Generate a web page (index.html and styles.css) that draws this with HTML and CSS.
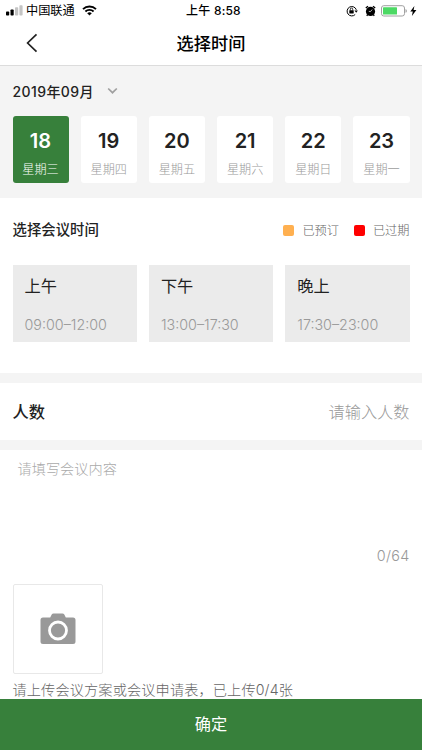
FILE: index.html
```
<!DOCTYPE html>
<html lang="zh-CN">
<head>
    <meta charset="UTF-8">
    <meta name="viewport" content="width=device-width, initial-scale=1.0">
    <title>选择时间</title>
    <link rel="stylesheet" href="styles.css">
</head>
<body>
    <div class="status-bar">
        <div class="carrier">
            <svg class="signal" width="17" height="11" viewBox="0 0 17 11">
                <rect x="0" y="6.5" width="3.2" height="4" rx="0.8" fill="#000"/>
                <rect x="4.5" y="4.5" width="3.2" height="6" rx="0.8" fill="#000"/>
                <rect x="9" y="2.3" width="3.2" height="8.2" rx="0.8" fill="#c4c4c4"/>
                <rect x="13.4" y="0.2" width="3.2" height="10.3" rx="0.8" fill="#c4c4c4"/>
            </svg>
            <span>中国联通</span>
            <svg class="wifi" width="15" height="11" viewBox="0 0 15 11">
                <path d="M1 4.1a9.3 9.3 0 0 1 13 0M3.4 6.5a5.9 5.9 0 0 1 8.2 0" fill="none" stroke="#000" stroke-width="1.9"/>
                <path d="M7.5 10.6L5.2 8.3a3.3 3.3 0 0 1 4.6 0z"/>
            </svg>
        </div>
        <div class="clock">上午 8:58</div>
        <div class="indicators">
            <svg width="12" height="12" viewBox="0 0 12 12">
                <path d="M9.2 9.5A4.7 4.7 0 1 1 10.3 4.8" fill="none" stroke="#000" stroke-width="1"/>
                <path d="M8.4 5.4h3.5L10.2 7.8z"/>
                <rect x="3.3" y="5.2" width="4.4" height="3.2" rx="0.4"/>
                <path d="M4.3 5.4V4.2a1.2 1.2 0 0 1 2.4 0v1.2" fill="none" stroke="#000" stroke-width="0.8"/>
            </svg>
            <svg class="alarm" width="11" height="12" viewBox="0 0 11 12">
                <circle cx="5.5" cy="6.4" r="4.6"/>
                <path d="M0.8 3.1L3 1.2M8 1.2l2.2 1.9M2.6 9.7l-0.9 1M8.4 9.7l0.9 1" stroke="#000" stroke-width="1.3"/>
                <path d="M7.2 4.5L5.5 6.6L3.8 6.3" fill="none" stroke="#fff" stroke-width="0.7"/>
            </svg>
            <svg class="battery" width="26" height="12" viewBox="0 0 26 12">
                <rect x="0.5" y="0.7" width="23" height="10.3" rx="2.3" fill="none" stroke="#a0a0a0"/>
                <rect x="2" y="2.2" width="14" height="7.3" rx="0.6" fill="#4cd964"/>
                <path d="M24.5 4a2 2 0 0 1 0 3.8z" fill="#a0a0a0"/>
            </svg>
            <svg class="bolt" width="7" height="10" viewBox="0 0 7 10">
                <path d="M4.4 0L0.3 5.6h2.5L1.9 10l4.5-6H3.6z"/>
            </svg>
        </div>
    </div>

    <div class="nav">
        <svg class="back" width="12" height="20" viewBox="0 0 12 20">
            <path d="M10.5 1.3L1.6 10l8.9 8.7" fill="none" stroke="#222" stroke-width="1.7"/>
        </svg>
        <h1>选择时间</h1>
    </div>

    <div class="dates">
        <div class="month">
            <span>2019年09月</span>
            <svg width="11" height="8" viewBox="0 0 11 8">
                <path d="M1.2 1.5l4.3 4.2l4.3-4.2" fill="none" stroke="#a0a0a0" stroke-width="1.7"/>
            </svg>
        </div>
        <div class="days">
            <div class="day active"><b>18</b><span>星期三</span></div>
            <div class="day"><b>19</b><span>星期四</span></div>
            <div class="day"><b>20</b><span>星期五</span></div>
            <div class="day"><b>21</b><span>星期六</span></div>
            <div class="day"><b>22</b><span>星期日</span></div>
            <div class="day"><b>23</b><span>星期一</span></div>
        </div>
    </div>

    <div class="sessions">
        <div class="sessions-head">
            <h2>选择会议时间</h2>
            <div class="legend"><i class="booked"></i>已预订</div>
            <div class="legend"><i class="expired"></i>已过期</div>
        </div>
        <div class="session-list">
            <div class="session"><p>上午</p><span>09:00–12:00</span></div>
            <div class="session"><p>下午</p><span>13:00–17:30</span></div>
            <div class="session"><p>晚上</p><span>17:30–23:00</span></div>
        </div>
    </div>

    <div class="people">
        <span>人数</span>
        <span class="hint">请输入人数</span>
    </div>

    <div class="content">
        <div class="content-hint">请填写会议内容</div>
        <div class="count">0/64</div>
        <div class="upload">
            <svg width="36" height="32" viewBox="0 0 36 32">
                <path d="M3 4.6h7.2l1.5-3Q12.3 0.5 13.6 0.5h8.8q1.3 0 1.9 1.1l1.5 3H33q2.5 0 2.5 2.5v21.4q0 2.5-2.5 2.5H3q-2.5 0-2.5-2.5V7.1q0-2.5 2.5-2.5z" fill="#999"/>
                <circle cx="18" cy="17.5" r="8.5" fill="none" stroke="#fff" stroke-width="2.8"/>
            </svg>
        </div>
        <div class="upload-tip">请上传会议方案或会议申请表，已上传0/4张</div>
    </div>

    <div class="confirm">确定</div>
</body>
</html>
```
FILE: styles.css
```
* {
    box-sizing: border-box;
}
body {
    margin: 0;
    height: 750px;
    overflow: hidden;
    display: flex;
    flex-direction: column;
    background-color: #fff;
    color: #222;
    font-family: Inter, "Noto Sans CJK SC", sans-serif;
}
h1, h2, p {
    margin: 0;
}
svg {
    display: block;
    flex: none;
}

/* status bar */
.status-bar {
    height: 21px;
    flex: none;
    display: grid;
    grid-template-columns: 1fr auto 1fr;
    align-items: center;
    padding: 0 5px 0 6px;
    color: #000;
    font-size: 12.2px;
    line-height: 20px;
}
.carrier {
    display: flex;
    align-items: center;
}
.signal {
    margin-right: 3px;
}
.wifi {
    margin-left: 7px;
}
.clock {
    padding-left: 4px;
    font-size: 12px;
    font-weight: 500;
    letter-spacing: 0.2px;
}
.indicators {
    display: flex;
    align-items: center;
    justify-content: flex-end;
}
.alarm {
    margin-left: 7px;
}
.battery {
    margin-left: 5px;
}
.bolt {
    margin-left: 3px;
}

/* title bar */
.nav {
    height: 45px;
    flex: none;
    display: grid;
    grid-template-columns: 1fr auto 1fr;
    align-items: center;
    padding: 0 26px;
    border-bottom: 1px solid #dcdcdc;
}
.nav h1 {
    padding-top: 1px;
    color: #000;
    font-size: 17.2px;
    font-weight: 500;
    line-height: 43px;
}

/* date picker */
.dates {
    height: 132px;
    flex: none;
    padding: 14px 12.5px 0;
    background-color: #f4f4f4;
}
.month {
    display: flex;
    align-items: center;
    gap: 13px;
    height: 22px;
    font-size: 14px;
    font-weight: 500;
    letter-spacing: 0.4px;
}
.days {
    display: grid;
    grid-template-columns: repeat(6, 1fr);
    gap: 12.2px;
    margin-top: 14px;
}
.day {
    height: 66.5px;
    padding-top: 12px;
    border-radius: 3px;
    background-color: #fff;
    text-align: center;
}
.day b {
    display: block;
    font-size: 20px;
    font-weight: 600;
    line-height: 26px;
}
.day span {
    display: block;
    margin-top: 6px;
    color: #999;
    font-size: 12.1px;
    font-weight: 300;
    line-height: 20px;
}
.day.active {
    background-color: #37803b;
}
.day.active b,
.day.active span {
    color: #fff;
}

/* morning / afternoon / evening */
.sessions {
    height: 175px;
    flex: none;
    padding: 20px 12.5px 0;
}
.sessions-head {
    display: flex;
    align-items: center;
    height: 24px;
}
.sessions-head h2 {
    margin-right: auto;
    font-size: 14.4px;
    font-weight: 500;
    line-height: 24px;
}
.legend {
    display: flex;
    align-items: center;
    margin-left: 15px;
    color: #666;
    font-size: 12.2px;
    font-weight: 300;
}
.legend i {
    width: 11px;
    height: 11px;
    margin-right: 8px;
    border-radius: 2px;
}
.booked {
    background-color: #ffb050;
}
.expired {
    background-color: #f00;
}
.session-list {
    display: grid;
    grid-template-columns: repeat(3, 1fr);
    gap: 12.2px;
    margin-top: 23px;
}
.session {
    height: 77.4px;
    padding: 8px 12px 0;
    background-color: #ebebeb;
}
.session p {
    font-size: 16.2px;
    line-height: 26px;
}
.session span {
    display: block;
    margin-top: 14.5px;
    color: #999;
    font-size: 14.3px;
    font-weight: 300;
    line-height: 22px;
}

/* number of people */
.people {
    height: 77px;
    flex: none;
    display: flex;
    align-items: center;
    justify-content: space-between;
    padding: 0 12.5px;
    border-top: 10px solid #f4f4f4;
    border-bottom: 10px solid #f4f4f4;
    font-size: 16.2px;
    font-weight: 500;
    line-height: 24px;
}
.people .hint {
    color: #999;
    font-weight: 300;
}

/* meeting content */
.content {
    height: 249px;
    flex: none;
    padding: 7px 12.5px 0;
    font-weight: 300;
}
.content-hint {
    padding-left: 5px;
    color: #aaa;
    font-size: 14.2px;
    line-height: 24px;
}
.count {
    margin-top: 63px;
    color: #999;
    font-size: 14.4px;
    letter-spacing: 0.3px;
    line-height: 24px;
    text-align: right;
}
.upload {
    display: flex;
    align-items: center;
    justify-content: center;
    width: 90px;
    height: 90px;
    margin-top: 16px;
    border: 1px solid #e8e8e8;
    border-radius: 2px;
}
.upload-tip {
    margin-top: 4px;
    color: #666;
    font-size: 14.2px;
    letter-spacing: 0.12px;
    line-height: 24px;
}

/* confirm button */
.confirm {
    height: 51px;
    flex: none;
    background-color: #37803b;
    color: #fff;
    font-size: 16.2px;
    line-height: 51px;
    text-align: center;
}
```
